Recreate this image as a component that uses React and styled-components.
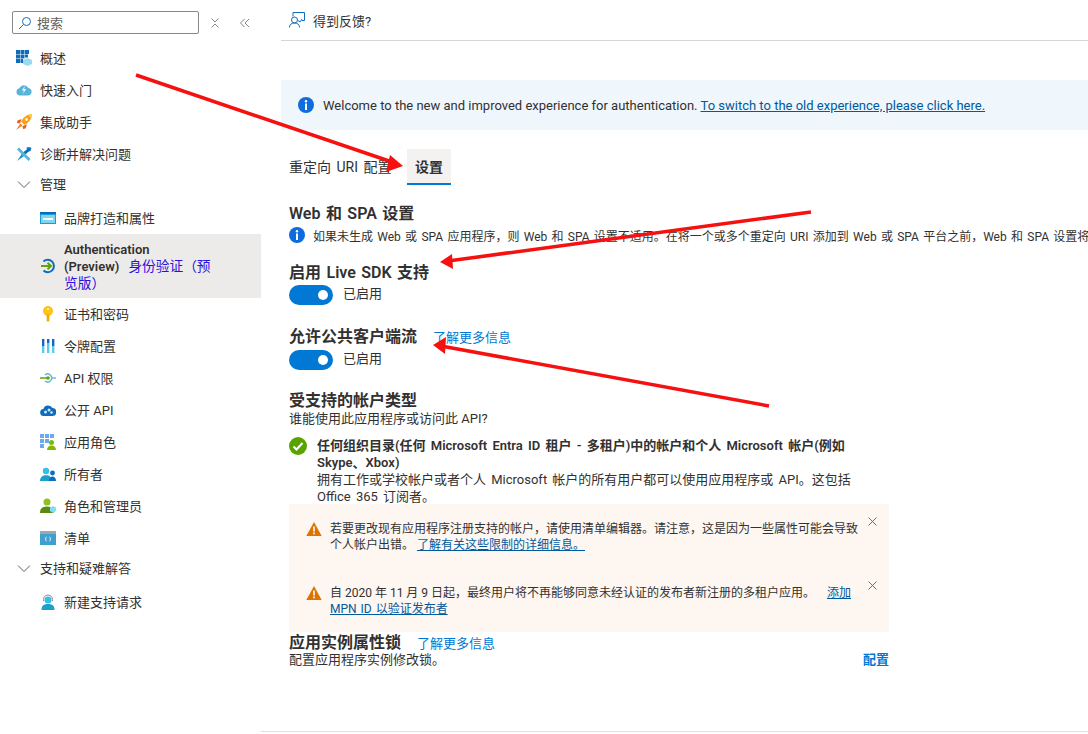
import React from "react";
import styled, { createGlobalStyle } from "styled-components";

const Global = createGlobalStyle`
  html, body { margin: 0; padding: 0; background: #fff; }
  body { width: 1088px; height: 734px; overflow: hidden; font-family: "Roboto", "Noto Sans CJK SC", sans-serif; font-size: 13px; color: #323130; }
  * { box-sizing: border-box; }
`;

const Page = styled.div`
  position: relative;
  display: flex;
  width: 1088px;
  height: 734px;
  overflow: hidden;
`;
const Side = styled.nav`
  width: 261px;
  flex: none;
  padding-top: 11px;
`;
const SearchRow = styled.div`
  display: flex;
  align-items: center;
  height: 23px;
  padding-left: 12px;
`;
const SearchBox = styled.div`
  width: 187px;
  height: 23px;
  border: 1px solid #8a8886;
  border-radius: 2px;
  display: flex;
  align-items: center;
  gap: 5px;
  padding-left: 5px;
  font-size: 13px;
  color: #605e5c;
`;
const SmallBtn = styled.span`
  display: flex;
  width: 12px;
  height: 12px;
  margin-left: ${p => p.$ml}px;
  color: #8a8886;
`;
const NavList = styled.div`
  display: flex;
  flex-direction: column;
  padding-top: 8px;
`;
const Item = styled.div`
  display: flex;
  align-items: center;
  height: ${p => p.$h || 32}px;
  padding-left: ${p => (p.$sub ? 40 : 16)}px;
  padding-top: ${p => p.$pt || 0}px;
  background: ${p => (p.$active ? "#edebe9" : "transparent")};
  line-height: 17px;
  font-size: 13px;
  color: #323130;
`;
const IconSlot = styled.span`
  display: flex;
  width: 16px;
  height: 16px;
  flex: none;
  margin-right: 8px;
`;
const ActiveText = styled.div`
  width: 150px;
  font-weight: 600;
  color: #323130;
`;
const Translated = styled.span`
  font-weight: 400;
  font-size: 13.7px;
  color: #2b11e0;
  margin-left: 9px;
`;
const Main = styled.main`
  flex: 1;
  min-width: 0;
  display: flex;
  flex-direction: column;
  position: relative;
`;
const CommandBar = styled.div`
  height: 41px;
  margin-left: 20px;
  border-bottom: 1px solid #d6d6d6;
  display: flex;
  align-items: center;
  padding: 0 0 0 8px;
  gap: 8px;
  font-size: 13px;
`;
const Banner = styled.div`
  margin: 39px 0 0 20px;
  height: 50px;
  background: #eff6fc;
  display: flex;
  align-items: center;
  padding-left: 17px;
  gap: 9px;
  white-space: nowrap;
  font-size: 13px;
`;
const BannerLink = styled.a`
  color: #005a9e;
  text-decoration: underline;
`;
const Body = styled.div`
  margin-left: 28px;
  width: 800px;
`;
const Tabs = styled.div`
  display: flex;
  align-items: stretch;
  height: 36px;
  margin-top: 19px;
`;
const Tab = styled.div`
  display: flex;
  align-items: center;
  justify-content: ${p => (p.$on ? "center" : "flex-start")};
  font-size: 14px;
  word-spacing: 2px;
  width: ${p => (p.$on ? "44px" : "103px")};
  margin-left: ${p => (p.$on ? "15px" : "0")};
  font-weight: ${p => (p.$on ? 700 : 400)};
  background: ${p => (p.$on ? "#f3f2f1" : "transparent")};
  border-bottom: ${p => (p.$on ? "2px solid #0078d4" : "2px solid transparent")};
`;
const H2 = styled.h2`
  margin: ${p => p.$mt}px 0 0;
  font-size: 16px;
  line-height: 20px;
  font-weight: 600;
  word-spacing: 1.500px;
  color: #323130;
  display: flex;
  align-items: baseline;
`;
const Learn = styled.a`
  margin-left: 16px;
  font-size: 13px;
  font-weight: 400;
  color: #0078d4;
`;
const InfoLine = styled.div`
  display: flex;
  align-items: center;
  gap: 8px;
  height: 18px;
  margin-top: 2px;
  white-space: nowrap;
  font-size: 12px;
  word-spacing: 1.300px;
`;
const ToggleRow = styled.div`
  display: flex;
  align-items: center;
  gap: 10px;
  height: 20px;
  margin-top: 2px;
  font-size: 13px;
`;
const ToggleLabel = styled.span`
  margin-bottom: 5px;
`;
const Track = styled.span`
  position: relative;
  display: block;
  width: 44px;
  height: 20px;
  border-radius: 10px;
  background: #0078d4;
  &::after {
    content: "";
    position: absolute;
    right: 5px;
    top: 5px;
    width: 10px;
    height: 10px;
    border-radius: 50%;
    background: #fff;
  }
`;
const Text = styled.div`
  font-size: 13px;
  line-height: 17px;
  margin-top: -1px;
`;
const Option = styled.div`
  display: flex;
  gap: 10px;
  margin-top: 10px;
  width: 570px;
`;
const OptionBody = styled.div`
  line-height: 17px;
  font-size: 13px;
  width: 545px;
  word-spacing: 2px;
`;
const OptionTitle = styled.div`
  font-weight: 600;
`;
const Warning = styled.div`
  width: 600px;
  height: 128px;
  margin-top: -1px;
  background: #fdf6f1;
  padding: 17px 12px 0 17px;
  display: flex;
  flex-direction: column;
  gap: 31px;
`;
const WarnRow = styled.div`
  display: flex;
  gap: 8px;
  font-size: 12px;
  line-height: 16px;
  height: 33px;
`;
const WarnText = styled.div`
  width: 534px;
  color: #323130;
`;
const WarnLink = styled.a`
  color: #005a9e;
  text-decoration: underline;
  word-spacing: 1px;
`;
const Close = styled.span`
  display: flex;
  width: 9px;
  height: 9px;
  margin: -4px 0 0 2px;
  color: #605e5c;
`;
const ConfigRow = styled.div`
  display: flex;
  justify-content: space-between;
  width: 600px;
  margin-top: -3px;
  font-size: 13px;
  line-height: 17px;
`;
const ConfigLink = styled.a`
  color: #0078d4;
  font-weight: 600;
`;
const FootLine = styled.div`
  position: absolute;
  left: 0;
  right: 0;
  bottom: 2px;
  height: 1px;
  background: #e1dfdd;
`;
const ArrowLayer = styled.svg`
  position: absolute;
  left: 0;
  top: 0;
  pointer-events: none;
`;

const I = ({ children, vb = "0 0 16 16" }) => <svg width="16" height="16" viewBox={vb}>{children}</svg>;

const icons = {
  overview: <I><path fill="#0f6cbd" d="M0 0h4v4H0zM4.500 0h4v4h-4zM9 0h4v4H9zM0 4.500h4v4H0zM4.500 4.500h4v4h-4zM9 4.500h3v3H9zM0 9h4v4H0zM4.500 9h2.500v4H4.500z"/><path fill="#9ad9ee" d="M11.500 8l4.500 2v4l-4.500 2-4.500-2v-4z"/></I>,
  cloud: <I><path fill="#59b4d9" d="M3.800 13.500a3.700 3.700 0 0 1-.4-7.300A5 5 0 0 1 12.400 6a3.800 3.800 0 0 1 0 7.500z"/><path fill="#fff" d="M9 3.500L6 8.500h2l-1.200 3.500 3.400-5H8z"/></I>,
  rocket: <I><path fill="#f7a21a" d="M16 0c-5 .3-8.500 3-11 7.500L8.500 11C13 8.500 15.700 5 16 0z"/><path fill="#e8611a" d="M5.500 5L1.500 6.500 1 9l3 .5zM11 10.500L9.500 14.500 7 15l-.5-3z"/><path fill="#ffd24a" d="M12 .8L15.200 4 16 0z"/><circle cx="10.500" cy="5.500" r="1.400" fill="#fff3c4"/><path fill="#e8811a" d="M4.500 9.500l2 2L0 16z"/></I>,
  tools: <I><path fill="#0072c6" d="M14 1l1.500 1.500-8 8L5 8z"/><path fill="#59b4d9" d="M1 3.500L3 1.500l11.500 11.500-2 2z"/><path fill="#1e8fc9" d="M1 15l4.500-6.500 2 2z"/><path fill="#0072c6" d="M10.500 1.500l3-.5-1.500 2 1 1 2-1.500-.5 2.500-3 1z"/></I>,
  brand: <I><path fill="#1e9bd7" d="M0 2h16v12H0z"/><path fill="#7fd6f0" d="M1 5h14v8H1z"/><path fill="#fff" d="M3 8h10v2H3z"/><path fill="#0f6cbd" d="M0 2h16v2H0z"/></I>,
  auth: <I><path fill="none" stroke="#0f6cbd" strokeWidth="2" d="M3.500 3.500a6.200 6.200 0 1 1 0 9"/><path fill="none" stroke="#5ea50a" strokeWidth="2" d="M1 8h9"/><path fill="none" stroke="#5ea50a" strokeWidth="2" d="M7.500 4.700L11 8l-3.500 3.300"/></I>,
  key: <I><circle cx="8" cy="5" r="5" fill="#fcc419"/><path fill="#f2a900" d="M6.700 8h2.600v6.500L8 16l-1.300-1.500z"/><circle cx="8" cy="3" r="1" fill="#fff3bf"/></I>,
  token: <I><path fill="#0f6cbd" d="M2 1h2.400v7H2zM7 1h2.400v4H7zM12 1h2.400v7H12z"/><path fill="#5cc8ee" d="M2 8h2.400v7H2zM7 5h2.400v10H7zM12 8h2.400v7H12z"/></I>,
  api: <I><path stroke="#5ea50a" strokeWidth="1.500" d="M0 8h9"/><path stroke="#59b4d9" strokeWidth="1.300" d="M12 8h4"/><path fill="none" stroke="#59b4d9" strokeWidth="1.300" d="M5 5a4 4 0 1 1 0 6"/><circle cx="8" cy="8" r="1.800" fill="#5ea50a"/></I>,
  expose: <I><path fill="#0f6cbd" d="M4 14a3.500 3.500 0 0 1-.6-7A5 5 0 0 1 12.500 6a4 4 0 0 1-.3 8z"/><circle cx="5.500" cy="10" r="1.500" fill="#cfe8f7"/><circle cx="9" cy="8" r="1.500" fill="#cfe8f7"/><circle cx="11.500" cy="10.500" r="1.300" fill="#cfe8f7"/></I>,
  roles: <I><path fill="#6ea8ef" d="M0 0h4v4H0zM5 0h4v4H5zM10 0h4v4h-4zM0 5h4v4H0zM5 5h4v4H5zM0 10h4v4H0z"/><circle cx="11.500" cy="8.500" r="2.500" fill="#7fba00"/><path fill="#7fba00" d="M7 16c0-3 2-4.500 4.500-4.500S16 13 16 16z"/></I>,
  owners: <I><circle cx="6" cy="5" r="3.200" fill="#32bfe8"/><path fill="#1c9fcb" d="M0 15c0-4 2.500-5.800 6-5.800s6 1.800 6 5.800z"/><circle cx="12.500" cy="7" r="2.400" fill="#0f6cbd"/><path fill="#0f6cbd" d="M9 15c0-3 1.500-4.500 3.500-4.500S16 12 16 15z"/></I>,
  admins: <I><circle cx="7" cy="4" r="3.500" fill="#8cc21f"/><path fill="#5b8a12" d="M0 15c0-5 3-6.500 7-6.500S14 10 14 15z"/><path fill="#7fe0f5" d="M13 8l3 1.500v3.500l-3 2-3-2V9.500z"/></I>,
  manifest: <I><path fill="#3f9fcf" d="M0 1h16v14H0z"/><path fill="#a5a5a5" d="M0 1h16v3H0z"/><path fill="none" stroke="#fff" d="M6.500 7c-1 0-.6 1.500-1 2 .4.500 0 2 1 2M9.500 7c1 0 .6 1.500 1 2-.4.500 0 2-1 2"/></I>,
  support: <I><circle cx="8" cy="6" r="3.500" fill="#32bfe8"/><path fill="none" stroke="#8a8886" d="M3.500 7V5.500a4.500 4.500 0 0 1 9 0V7"/><path fill="#1c9fcb" d="M1.500 16c0-4.500 2.500-6 6.500-6s6.500 1.500 6.500 6z"/></I>,
};

const Chevron = () => <svg width="16" height="16" viewBox="0 0 16 16"><path fill="none" stroke="#605e5c" d="M2 5.500l6 6 6-6"/></svg>;
const InfoIcon = () => <svg width="16" height="16" viewBox="0 0 16 16" style={{flex:"none"}}><circle cx="8" cy="8" r="8" fill="#0f6cdc"/><circle cx="8" cy="4.300" r="1.200" fill="#fff"/><path fill="#fff" d="M7 6.500h2V13H7z"/></svg>;
const WarnIcon = () => <svg width="16" height="16" viewBox="0 0 16 16" style={{flex:"none"}}><path fill="#db7500" d="M8 1l7.700 14H.3z"/><path fill="#fff" d="M7.200 5.500h1.600v5H7.200zM7.200 11.500h1.600v1.700H7.200z"/></svg>;
const X = () => <svg width="9" height="9" viewBox="0 0 9 9"><path stroke="currentColor" strokeWidth=".9" d="M.5.500l8 8M8.500.500l-8 8"/></svg>;
const Red = ({ line, head }) => <g><path d={line} stroke="#f5110f" strokeWidth="3.500" fill="none"/><path d={head} fill="#f5110f"/></g>;

const nav = [
  ["overview", "概述"], ["cloud", "快速入门"], ["rocket", "集成助手"], ["tools", "诊断并解决问题"],
];
const manage2 = [
  ["key", "证书和密码"], ["token", "令牌配置"], ["api", "API 权限"], ["expose", "公开 API"], ["roles", "应用角色"],
  ["owners", "所有者"], ["admins", "角色和管理员"], ["manifest", "清单"],
];

export default function App() {
  return (
    <Page>
      <Global />
      <Side>
        <SearchRow>
          <SearchBox>
            <svg width="14" height="14" viewBox="0 0 14 14"><circle cx="8.500" cy="5.500" r="4" fill="none" stroke="#0f6cbd"/><path stroke="#0f6cbd" d="M5.500 8.500L1 13"/></svg>
            搜索
          </SearchBox>
          <SmallBtn $ml={10}><svg width="12" height="12" viewBox="0 0 12 12"><path fill="none" stroke="currentColor" d="M2.500 1.500L6 5l3.500-3.500M2.500 10.500L6 7l3.500 3.500"/></svg></SmallBtn>
          <SmallBtn $ml={18}><svg width="12" height="12" viewBox="0 0 12 12"><path fill="none" stroke="currentColor" d="M5.500 2L1.500 6l4 4M10 2L6 6l4 4"/></svg></SmallBtn>
        </SearchRow>
        <NavList>
          {nav.map(([k, t]) => <Item key={k}><IconSlot>{icons[k]}</IconSlot>{t}</Item>)}
          <Item $h={28}><IconSlot><Chevron /></IconSlot>管理</Item>
          <Item $sub $h={36} $pt={4}><IconSlot>{icons.brand}</IconSlot>品牌打造和属性</Item>
          <Item $sub $active $h={64}>
            <IconSlot>{icons.auth}</IconSlot>
            <ActiveText>Authentication<br />(Preview)<Translated>身份验证（预览版）</Translated></ActiveText>
          </Item>
          {manage2.map(([k, t]) => <Item key={k} $sub><IconSlot>{icons[k]}</IconSlot>{t}</Item>)}
          <Item $h={28}><IconSlot><Chevron /></IconSlot>支持和疑难解答</Item>
          <Item $sub $h={40}><IconSlot>{icons.support}</IconSlot>新建支持请求</Item>
        </NavList>
      </Side>
      <Main>
        <CommandBar>
          <svg width="16" height="16" viewBox="0 0 16 16"><path fill="none" stroke="#0f6cbd" d="M4 4.500V.5h11.500v8H13M9 8.500l2 1.500 2-3"/><circle cx="5.500" cy="8" r="3" fill="none" stroke="#0f6cbd"/><path fill="none" stroke="#0f6cbd" d="M.5 15.500c0-3 2-4.500 5-4.500s5 1.500 5 4.500"/></svg>
          得到反馈?
        </CommandBar>
        <Banner>
          <InfoIcon />
          <span>Welcome to the new and improved experience for authentication. <BannerLink>To switch to the old experience, please click here.</BannerLink></span>
        </Banner>
        <Body>
          <Tabs>
            <Tab>重定向 URI 配置</Tab>
            <Tab $on>设置</Tab>
          </Tabs>
          <H2 $mt={19}>Web 和 SPA 设置</H2>
          <InfoLine>
            <InfoIcon />
            <span>如果未生成 Web 或 SPA 应用程序，则 Web 和 SPA 设置不适用。在将一个或多个重定向 URI 添加到 Web 或 SPA 平台之前，Web 和 SPA 设置将</span>
          </InfoLine>
          <H2 $mt={19}>启用 Live SDK 支持</H2>
          <ToggleRow><Track /><ToggleLabel>已启用</ToggleLabel></ToggleRow>
          <H2 $mt={22}>允许公共客户端流<Learn>了解更多信息</Learn></H2>
          <ToggleRow><Track /><ToggleLabel>已启用</ToggleLabel></ToggleRow>
          <H2 $mt={21}>受支持的帐户类型</H2>
          <Text>谁能使用此应用程序或访问此 API?</Text>
          <Option>
            <svg width="18" height="18" viewBox="0 0 18 18" style={{flex:"none"}}><circle cx="9" cy="9" r="9" fill="#57a300"/><path fill="none" stroke="#fff" strokeWidth="2" d="M4.500 9.500l3 3 6-6.500"/></svg>
            <OptionBody>
              <OptionTitle>任何组织目录(任何 Microsoft Entra ID 租户 - 多租户)中的帐户和个人 Microsoft 帐户(例如 Skype、Xbox)</OptionTitle>
              拥有工作或学校帐户或者个人 Microsoft 帐户的所有用户都可以使用应用程序或 API。这包括 Office 365 订阅者。
            </OptionBody>
          </Option>
          <Warning>
            <WarnRow>
              <WarnIcon />
              <WarnText>若要更改现有应用程序注册支持的帐户，请使用清单编辑器。请注意，这是因为一些属性可能会导致个人帐户出错。 <WarnLink>了解有关这些限制的详细信息。</WarnLink></WarnText>
              <Close><X /></Close>
            </WarnRow>
            <WarnRow>
              <WarnIcon />
              <WarnText>自 2020 年 11 月 9 日起，最终用户将不再能够同意未经认证的发布者新注册的多租户应用。&nbsp;&nbsp;&nbsp;&nbsp;<WarnLink>添加 MPN ID 以验证发布者</WarnLink></WarnText>
              <Close><X /></Close>
            </WarnRow>
          </Warning>
          <H2 $mt={1}>应用实例属性锁<Learn>了解更多信息</Learn></H2>
          <ConfigRow><span>配置应用程序实例修改锁。</span><ConfigLink>配置</ConfigLink></ConfigRow>
        </Body>
        <FootLine />
      </Main>
      <ArrowLayer width="1088" height="734" viewBox="0 0 1088 734">
        <Red line="M136 75L392 162" head="M403 166L390 155L386 172z" />
        <Red line="M811 212L448 261" head="M440 262L452 254L453 269z" />
        <Red line="M769 406L441 346" head="M433 345L446 337L445 354z" />
      </ArrowLayer>
    </Page>
  );
}
